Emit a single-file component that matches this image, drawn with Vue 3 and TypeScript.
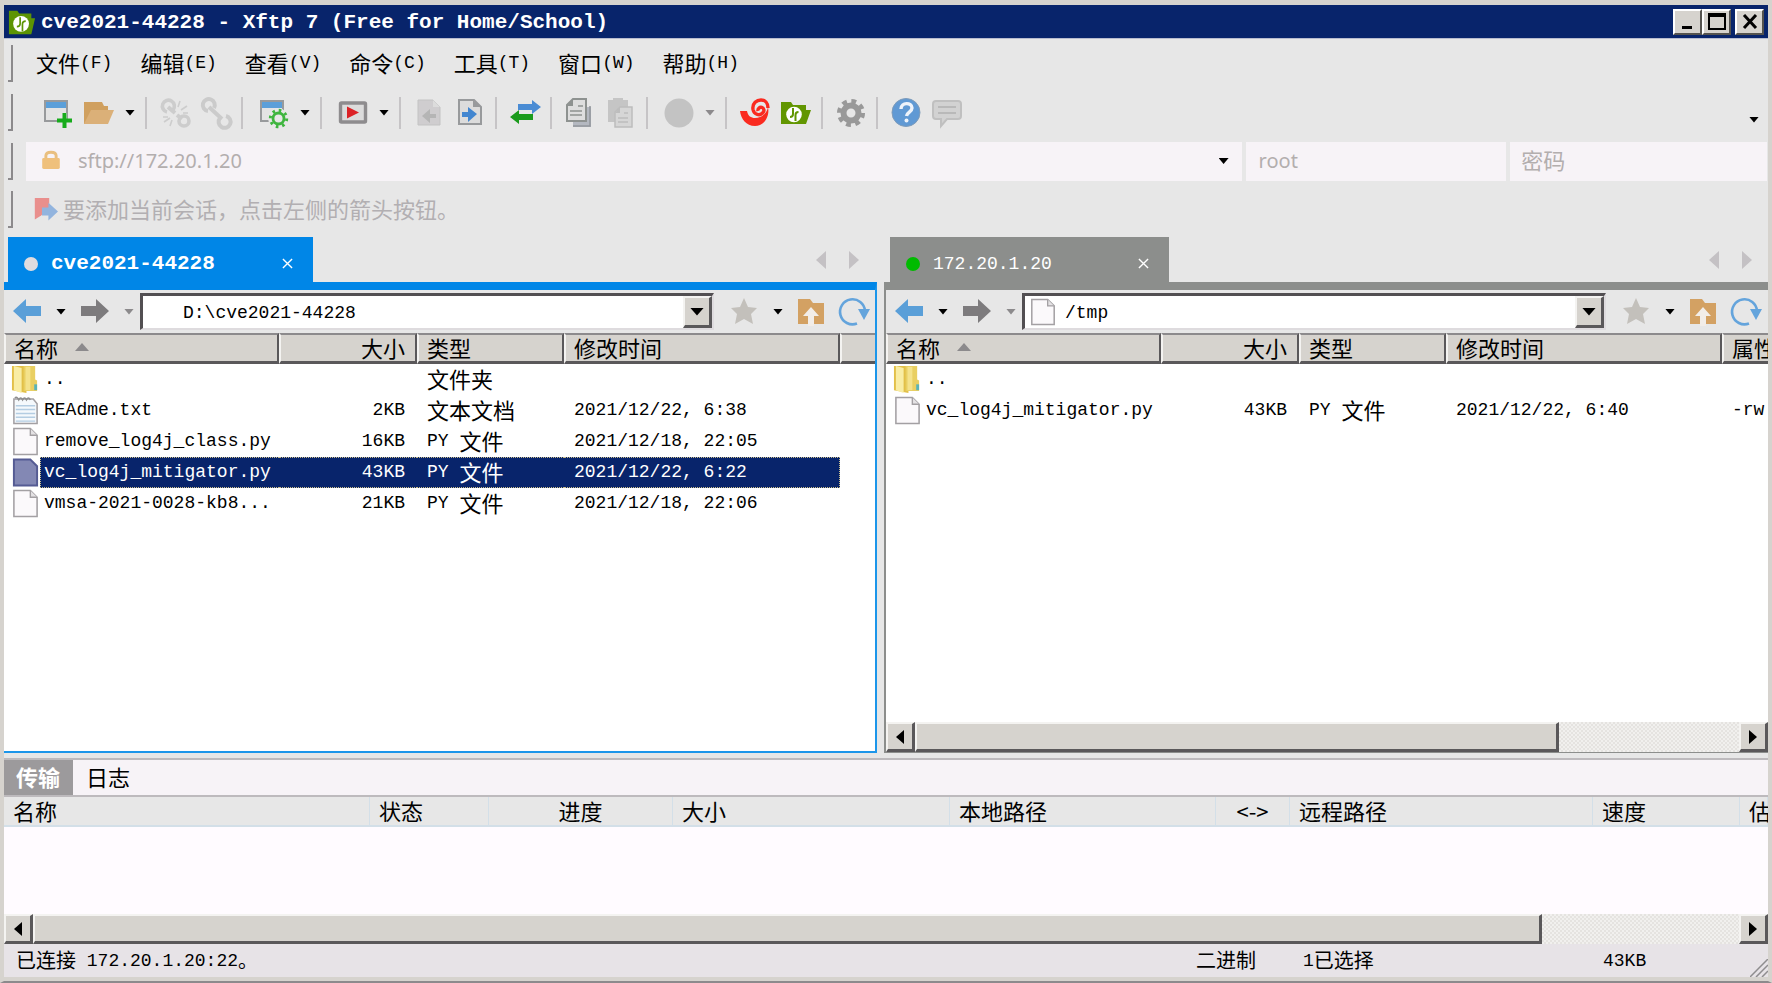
<script setup lang="ts">
import { h, ref } from 'vue'

interface FileRow {
  icon: string
  name: string
  size: string
  type: string
  modified: string
  attrs?: string
}

interface Pane {
  id: string
  title: string
  path: string
  pathIcon?: string
  rows: FileRow[]
  scroll: boolean
  hasAttrs: boolean
}

interface Tool {
  kind: 'icon' | 'drop' | 'sep' | 'wide'
  icon?: string
  label?: string
  off?: boolean
}

const pageShape =
  '<path d="M3 1.5h17l7 7v20H3z" fill="#fbf9fb" stroke="#a3a0a3" stroke-width="1.6"/><path d="M20 1.5v7h7" fill="#e4e2e4" stroke="#a3a0a3" stroke-width="1.4"/>'

const icons: Record<string, string> = {
  app: '<path d="M1 3h9l2 3h13v5h4l-4 17H1z" fill="#5d9404"/><circle cx="14" cy="17" r="8.500" fill="#fff"/><path d="M13 10v7q0 3-3.500 3M15.500 25v-8q0-3 3.500-3" fill="none" stroke="#5d9404" stroke-width="1.800"/>',
  newWindow:
    '<rect x="2" y="3" width="22" height="20" fill="#e3e3e3" stroke="#989a9c" stroke-width="2"/><path d="M3 4h20v6H3z" fill="#5b9fd9"/><path d="M15 15h9v9h-9z" fill="#e7e7e7"/><path d="M21.500 15v15M14 22.500h15" stroke="#17ab1c" stroke-width="4"/>',
  folder:
    '<path d="M0 4h18l2 4h4v18H0z" fill="#d0a05f"/><path d="M7 12h23l-6 14H0z" fill="#dbb078"/>',
  unlink:
    '<g fill="none" stroke="#cdcdcd" stroke-width="3.600"><path d="M13 12a6 6 0 1 0-6 2"/><circle cx="24" cy="23" r="5"/><path d="M8 9l7 6M17 17l5 4" stroke-width="4"/></g><path d="M18 9l2-6M21 12l6-4M23 15h5M4 24l6-4M10 28l2-6M3 19h5" stroke="#cdcdcd" stroke-width="1.600"/>',
  link: '<g fill="none" stroke="#cbcbcb" stroke-width="4"><path d="M13 10a6 6 0 1 0-6 3"/><path d="M8 9l13 12"/><path d="M19 20a6 6 0 1 0 6-2"/></g>',
  windowGear:
    '<rect x="2" y="3" width="22" height="20" fill="#e3e3e3" stroke="#989a9c" stroke-width="2"/><path d="M3 4h20v6H3z" fill="#5b9fd9"/><circle cx="19" cy="20" r="10" fill="#e7e7e7"/><circle cx="19.500" cy="20.500" r="5.500" fill="none" stroke="#3fb53f" stroke-width="2.800"/><circle cx="19.500" cy="20.500" r="8.200" fill="none" stroke="#3fb53f" stroke-width="3" stroke-dasharray="2.600 3.840"/>',
  play: '<rect x="2.500" y="5" width="25" height="19" rx="1" fill="#dcdcdc" stroke="#8e8c8e" stroke-width="3.400"/><path d="M9 8.500v12l12-6z" fill="#dc2226"/>',
  pageLeft:
    '<path d="M4 2h15l7 7v18H4z" fill="#cfcdcf" stroke="#c3c3c3"/><path d="M19 2v7h7" fill="#dcdcdc"/><path d="M22 16h-6v-5l-8 7 8 7v-5h6z" fill="#b5b5b5"/>',
  pageRight:
    '<path d="M4 2h15l7 7v17H4z" fill="#dcdcdc" stroke="#989a9c" stroke-width="2"/><path d="M18 2v7h8" fill="#989a9c"/><path d="M7 14h6V9l9 7-9 8v-5H7z" fill="#4286d0"/>',
  sync: '<path d="M8 6h14V2l9 7-9 7v-4H8z" fill="#4a8cd4"/><path d="M23 16v6H9v4l-9-7 9-7v4z" fill="#1b9b1c"/>',
  copy: '<path d="M8 9h18v20H8z" fill="#b4b8c0"/><path d="M25 8v20H8" fill="none" stroke="#92969c" stroke-width="1.500"/><path d="M8 1h13v22H2V7z" fill="#dedede" stroke="#8e9290" stroke-width="2"/><path d="M8 1v7H2" fill="#8e9290"/><path d="M13 8h5M5 13h12M5 17h12" stroke="#8e9290" stroke-width="1.600"/>',
  paste:
    '<path d="M2 2h5V0h10v2h5v22H2z" fill="#c5c5c5"/><path d="M14 9h12v20H9V14z" fill="#d6d6d6" stroke="#bdbdbd" stroke-width="1.500"/><path d="M14 9v6H9" fill="#bdbdbd"/><path d="M18 15h4M12 20h10M12 24h10" stroke="#bdbdbd" stroke-width="1.500"/>',
  disc: '<circle cx="15" cy="15" r="14.500" fill="#c3c3c3"/>',
  shell:
    '<path d="M0 13h7c1 5 4 7 8 7 7 0 12-5 13-11 2 10-4 19-13 19S1 21 0 13z" fill="#fa2b20"/><path d="M18 13a3 3 0 1 1 5 1.500c-3 4-9 2-10-3C12 5 17 2 21 2c4 0 7 3 7 8" fill="none" stroke="#fa2b20" stroke-width="3.400"/>',
  ftpFolder:
    '<path d="M0 4h10l2 3h13v5h5l-5 14H0z" fill="#629601"/><circle cx="13" cy="16.500" r="7.800" fill="#fff"/><path d="M12 10v6q0 3-3 3M14.500 23v-6q0-3 3-3" fill="none" stroke="#629601" stroke-width="2"/>',
  gear: '<circle cx="15" cy="15" r="7.500" fill="none" stroke="#999" stroke-width="6"/><circle cx="15" cy="15" r="11.800" fill="none" stroke="#999" stroke-width="4.500" stroke-dasharray="4.800 4.467"/>',
  help: '<circle cx="15" cy="14.500" r="14" fill="#6099d4" stroke="#7f9cba" stroke-width="1"/><path d="M10 11c0-7 11-7 11-1 0 4-5 4-5.500 8" fill="none" stroke="#eef3fa" stroke-width="3.400"/><circle cx="15.500" cy="22.500" r="2" fill="#eef3fa"/>',
  chat: '<path d="M4 3h22q3 0 3 3v12q0 3-3 3H15l-6 7v-7H4q-3 0-3-3V6q0-3 3-3z" fill="#d2d2d2" stroke="#c0c0c0" stroke-width="2"/><path d="M6 9h18M6 15h18" stroke="#b9b9b9" stroke-width="2"/>',
  lock: '<path d="M8 14V8q0-5 7-5t7 5v6" fill="none" stroke="#e9bf7f" stroke-width="4"/><rect x="3" y="11" width="24" height="15" rx="2" fill="#efc07c"/>',
  bookmark:
    '<path d="M1 0h18v12L9 22l-8 5z" fill="#e98f8d"/><path d="M10 12h8V6l12 11-12 11v-6h-8z" fill="#92b4de"/>',
  back: '<path d="M1 14 14 2v7h15v10H14v7z" fill="#5a9fd8"/>',
  forward: '<path d="M29 14 16 2v7H1v10h15v7z" fill="#7d7b7d"/>',
  star: '<path d="M15 1l4 9 9 1-6 6 2 10-9-5-9 5 2-10-6-6 9-1z" fill="#c3c0bb"/>',
  upFolder:
    '<path d="M1 2h12l3 4h11v21H1z" fill="#d3a163"/><path d="M14 10l8 9h-5v10h-6V19H6z" fill="#f2ede8"/>',
  refresh:
    '<path d="M18 26.500A12.500 12.500 0 1 1 26 14" fill="none" stroke="#64a4dc" stroke-width="2.600"/><path d="M19 12h12l-6 11z" fill="#64a4dc"/>',
  file: pageShape,
  text:
    '<path d="M3 3h20l4 5v20.500H3z" fill="#f5f9fc" stroke="#a3a0a3" stroke-width="1.600"/><path d="M4 2q2-2 4 2 2-4 4 0 2-4 4 0 2-4 4 0" fill="none" stroke="#8e8e8e" stroke-width="1.500"/><path d="M5 10h20M5 14h20M5 18h20M5 22h20M5 26h20" stroke="#b4cde2" stroke-width="1.500"/>',
  selected: '<path d="M3 1.500h17l7 7v20H3z" fill="#8388b4" stroke="#555b93" stroke-width="2"/>',
  dir: '<path d="M1 1h15v28L1 26z" fill="#e2c048"/><path d="M3 1l8 2v26l-8-3z" fill="#f9eda4"/><path d="M13 1h12v14l2 1v11H13z" fill="#e9cf62"/><path d="M15 2h5v24h-5z" fill="#f4e28b"/><path d="M24 20h3v6h-3z" fill="#59b3b8"/>',
}

const Icon = (props: { name: string }) =>
  h('svg', { viewBox: '0 0 30 30', 'aria-hidden': 'true', innerHTML: icons[props.name] })
Icon.props = ['name']

/* Han runs are set larger than the fixed-pitch Latin runs beside them. */
const Words = (props: { text: string }) =>
  h(
    'span',
    { class: 'words' },
    props.text
      .split(/([\u3000-\u9fff\uff00-\uffef]+)/)
      .filter(Boolean)
      .map((run) => h('span', { class: /[\u3000-\u9fff\uff00-\uffef]/.test(run) ? 'han' : 'latin' }, run)),
  )
Words.props = ['text']

const menus = ['文件(F)', '编辑(E)', '查看(V)', '命令(C)', '工具(T)', '窗口(W)', '帮助(H)']

const tools: Tool[] = [
  { kind: 'icon', icon: 'newWindow', label: '新建' },
  { kind: 'icon', icon: 'folder', label: '打开' },
  { kind: 'drop', label: '打开选项' },
  { kind: 'sep' },
  { kind: 'icon', icon: 'unlink', label: '断开' },
  { kind: 'icon', icon: 'link', label: '重新连接' },
  { kind: 'sep' },
  { kind: 'wide' },
  { kind: 'icon', icon: 'windowGear', label: '属性' },
  { kind: 'drop', label: '属性选项' },
  { kind: 'sep' },
  { kind: 'wide' },
  { kind: 'icon', icon: 'play', label: '运行' },
  { kind: 'drop', label: '运行选项' },
  { kind: 'sep' },
  { kind: 'icon', icon: 'pageLeft', label: '向左传输' },
  { kind: 'icon', icon: 'pageRight', label: '向右传输' },
  { kind: 'sep' },
  { kind: 'icon', icon: 'sync', label: '同步' },
  { kind: 'sep' },
  { kind: 'icon', icon: 'copy', label: '复制' },
  { kind: 'icon', icon: 'paste', label: '粘贴' },
  { kind: 'sep' },
  { kind: 'wide' },
  { kind: 'icon', icon: 'disc', label: '编码' },
  { kind: 'drop', label: '编码选项', off: true },
  { kind: 'sep' },
  { kind: 'icon', icon: 'shell', label: 'Xshell' },
  { kind: 'icon', icon: 'ftpFolder', label: 'Xftp' },
  { kind: 'sep' },
  { kind: 'icon', icon: 'gear', label: '选项' },
  { kind: 'sep' },
  { kind: 'icon', icon: 'help', label: '帮助' },
  { kind: 'icon', icon: 'chat', label: '反馈' },
]

const panes: Pane[] = [
  {
    id: 'local',
    title: 'cve2021-44228',
    path: 'D:\\cve2021-44228',
    scroll: false,
    hasAttrs: false,
    rows: [
      { icon: 'dir', name: '..', size: '', type: '文件夹', modified: '' },
      { icon: 'text', name: 'REAdme.txt', size: '2KB', type: '文本文档', modified: '2021/12/22, 6:38' },
      { icon: 'file', name: 'remove_log4j_class.py', size: '16KB', type: 'PY 文件', modified: '2021/12/18, 22:05' },
      { icon: 'file', name: 'vc_log4j_mitigator.py', size: '43KB', type: 'PY 文件', modified: '2021/12/22, 6:22' },
      { icon: 'file', name: 'vmsa-2021-0028-kb8...', size: '21KB', type: 'PY 文件', modified: '2021/12/18, 22:06' },
    ],
  },
  {
    id: 'remote',
    title: '172.20.1.20',
    path: '/tmp',
    pathIcon: 'file',
    scroll: true,
    hasAttrs: true,
    rows: [
      { icon: 'dir', name: '..', size: '', type: '', modified: '' },
      { icon: 'file', name: 'vc_log4j_mitigator.py', size: '43KB', type: 'PY 文件', modified: '2021/12/22, 6:40', attrs: '-rw' },
    ],
  },
]

const selected = ref('local:3')
const transferHeads = ['名称', '状态', '进度', '大小', '本地路径', '<->', '远程路径', '速度', '估']
</script>

<template>
  <div class="window">
    <header class="titlebar">
      <Icon name="app" class="app-icon" />
      <h1>cve2021-44228 - Xftp 7 (Free for Home/School)</h1>
      <div class="win-buttons">
        <button type="button" aria-label="最小化"><svg viewBox="0 0 20 18"><path d="M4 13h10v3H4z" /></svg></button>
        <button type="button" aria-label="最大化"><svg viewBox="0 0 20 18"><path d="M1 0h18v17H1zM3 4v11h14V4z" fill-rule="evenodd" /></svg></button>
        <button type="button" class="close" aria-label="关闭"><svg viewBox="0 0 20 18"><path d="M4 2l12 13M16 2L4 15" stroke="#000" stroke-width="3" /></svg></button>
      </div>
    </header>

    <nav class="bar menu">
      <i class="grip"></i>
      <button v-for="m in menus" :key="m" type="button"><Words :text="m" /></button>
    </nav>

    <div class="bar tools">
      <i class="grip"></i>
      <template v-for="(t, i) in tools" :key="i">
        <button v-if="t.kind === 'icon'" type="button" class="tool" :aria-label="t.label"><Icon :name="t.icon!" /></button>
        <button v-else-if="t.kind === 'drop'" type="button" class="drop" :class="{ off: t.off }" :aria-label="t.label"></button>
        <i v-else-if="t.kind === 'sep'" class="sep"></i>
        <i v-else class="space"></i>
      </template>
      <button type="button" class="drop more" aria-label="更多"></button>
    </div>

    <form class="bar address" @submit.prevent>
      <i class="grip"></i>
      <div class="field host">
        <Icon name="lock" />
        <input aria-label="地址" value="sftp://172.20.1.20" />
        <button type="button" class="drop" aria-label="历史"></button>
      </div>
      <div class="field user"><input aria-label="用户名" value="root" /></div>
      <div class="field pass"><input type="password" aria-label="密码" placeholder="密码" /></div>
    </form>

    <div class="bar hint">
      <i class="grip"></i>
      <Icon name="bookmark" />
      <span>要添加当前会话，点击左侧的箭头按钮。</span>
    </div>

    <main class="panes">
      <section v-for="p in panes" :key="p.id" class="pane" :class="p.id">
        <div class="tabs">
          <div class="tab">
            <i class="dot"></i>
            <span>{{ p.title }}</span>
            <button type="button" aria-label="关闭标签"><svg viewBox="0 0 12 12"><path d="M1 1l10 10M11 1L1 11" /></svg></button>
          </div>
          <div class="tab-scroll">
            <button type="button" aria-label="上一个"><svg viewBox="0 0 10 18"><path d="M10 0v18L0 9z" /></svg></button>
            <button type="button" aria-label="下一个"><svg viewBox="0 0 10 18"><path d="M0 0v18l10-9z" /></svg></button>
          </div>
        </div>
        <div class="frame">
          <div class="nav">
            <div class="group">
              <button type="button" class="tool" aria-label="后退"><Icon name="back" /></button>
              <button type="button" class="drop pad" aria-label="后退历史"></button>
              <button type="button" class="tool" aria-label="前进"><Icon name="forward" /></button>
              <button type="button" class="drop pad off" aria-label="前进历史"></button>
            </div>
            <div class="combo">
              <Icon v-if="p.pathIcon" :name="p.pathIcon" />
              <input aria-label="路径" :value="p.path" />
              <button type="button" class="raised" aria-label="路径列表"><i class="drop big"></i></button>
            </div>
            <div class="group">
              <button type="button" class="tool" aria-label="收藏"><Icon name="star" /></button>
              <button type="button" class="drop pad" aria-label="收藏列表"></button>
              <button type="button" class="tool" aria-label="上级目录"><Icon name="upFolder" /></button>
              <button type="button" class="tool" aria-label="刷新"><Icon name="refresh" /></button>
            </div>
          </div>
          <div class="list">
            <table class="files">
              <colgroup>
                <col class="c-name" /><col class="c-size" /><col class="c-type" /><col class="c-date" /><col />
              </colgroup>
              <thead>
                <tr>
                  <th>名称<i class="sort"></i></th>
                  <th class="num">大小</th>
                  <th>类型</th>
                  <th>修改时间</th>
                  <th>{{ p.hasAttrs ? '属性' : '' }}</th>
                </tr>
              </thead>
              <tbody>
                <tr
                  v-for="(r, i) in p.rows"
                  :key="r.name"
                  :class="{ picked: selected === p.id + ':' + i }"
                  @click="selected = p.id + ':' + i"
                >
                  <td class="name">
                    <div>
                      <Icon :name="selected === p.id + ':' + i ? 'selected' : r.icon" />
                      <span>{{ r.name }}</span>
                    </div>
                  </td>
                  <td class="num">{{ r.size }}</td>
                  <td><Words :text="r.type" /></td>
                  <td>{{ r.modified }}</td>
                  <td>{{ r.attrs }}</td>
                </tr>
              </tbody>
            </table>
          </div>
          <div v-if="p.scroll" class="scrollbar">
            <button type="button" class="raised" aria-label="向左滚动"><svg viewBox="0 0 8 14"><path d="M8 0v14L0 7z" /></svg></button>
            <i class="thumb raised"></i><i class="track"></i>
            <button type="button" class="raised" aria-label="向右滚动"><svg viewBox="0 0 8 14"><path d="M0 0v14l8-7z" /></svg></button>
          </div>
        </div>
      </section>
    </main>

    <section class="transfers">
      <div class="log-tabs">
        <button type="button" class="on">传输</button>
        <button type="button">日志</button>
      </div>
      <div class="queue">
        <table>
          <colgroup><col v-for="(t, i) in transferHeads" :key="t" :class="'q' + i" /></colgroup>
          <thead>
            <tr><th v-for="t in transferHeads" :key="t">{{ t }}</th></tr>
          </thead>
        </table>
      </div>
      <div class="scrollbar long">
        <button type="button" class="raised" aria-label="向左滚动"><svg viewBox="0 0 8 14"><path d="M8 0v14L0 7z" /></svg></button>
        <i class="thumb raised"></i><i class="track"></i>
        <button type="button" class="raised" aria-label="向右滚动"><svg viewBox="0 0 8 14"><path d="M0 0v14l8-7z" /></svg></button>
      </div>
    </section>

    <footer class="status">
      <span class="msg"><Words text="已连接 172.20.1.20:22。" /></span>
      <span class="mode"><Words text="二进制" /></span>
      <span class="count"><Words text="1已选择" /></span>
      <span class="bytes"><Words text="43KB" /></span>
      <svg class="resize" viewBox="0 0 18 18"><path d="M0 18L18 0M6 18L18 6M12 18l6-6" stroke="#8f8d8f" stroke-width="1.500" /></svg>
    </footer>
  </div>
</template>

<style>
body {
  margin: 0;
}
.words {
  display: inline-flex;
  align-items: center;
  height: 29px;
  vertical-align: top;
  white-space: pre;
}
.words .han {
  font-family: 'Noto Sans CJK SC', sans-serif;
  font-size: 22px;
  line-height: 26px;
  padding-bottom: 3px;
}
.status .words .han {
  font-size: 20px;
}
</style>

<style scoped>
* {
  box-sizing: border-box;
}
.window {
  display: flex;
  flex-direction: column;
  height: 100vh;
  border: solid #d6d3ce;
  border-width: 5px 4px 2px;
  border-bottom-color: #8c8a8c;
  background: #e7e7e7;
  color: #000;
  font: 18px/30px 'Liberation Mono', 'Noto Sans CJK SC', monospace;
  overflow: hidden;
}
button {
  padding: 0;
  border: 0;
  background: none;
  color: inherit;
  font: inherit;
}
input {
  min-width: 0;
  padding: 0;
  border: 0;
  outline: 0;
  background: none;
  font: inherit;
}
svg {
  display: block;
}

.titlebar {
  flex: none;
  display: flex;
  align-items: center;
  height: 34px;
  padding: 0 4px;
  background: #08246b;
  border-bottom: 1px solid #b8bccf;
  color: #fff;
}
.app-icon {
  width: 28px;
  height: 28px;
}
h1 {
  flex: 1;
  margin: 0 0 0 5px;
  padding-top: 3px;
  font-size: 21px;
  line-height: 30px;
  font-weight: bold;
  white-space: nowrap;
}
.win-buttons {
  display: flex;
}
.win-buttons button {
  display: flex;
  align-items: center;
  justify-content: center;
  width: 29px;
  height: 26px;
  background: #d6d3ce;
  border: 2px solid;
  border-color: #fff #55534f #55534f #fff;
}
.win-buttons svg {
  width: 20px;
  height: 18px;
}
.win-buttons .close {
  margin-left: 4px;
}

.bar {
  flex: none;
  display: flex;
  align-items: center;
  height: 49px;
}
.grip {
  flex: none;
  width: 5px;
  height: 37px;
  margin-left: 4px;
  border: solid #8c8a8c;
  border-width: 0 2px 2px 0;
}
.menu button {
  margin-left: 28px;
}
.menu .grip + button {
  margin-left: 23px;
}

.tools {
  gap: 11px;
}
.tools .grip {
  margin-right: 19px;
}
.tool {
  flex: none;
  width: 30px;
  height: 30px;
}
.tool svg {
  width: 30px;
  height: 30px;
  overflow: visible;
}
.drop {
  flex: none;
  display: block;
  width: 10px;
  height: 6px;
  background: #000;
  clip-path: polygon(0 0, 100% 0, 50% 100%);
}
.drop.off {
  background: #8c8a8c;
}
.drop.pad {
  margin: 0 2px;
}
.drop.big {
  width: 14px;
  height: 8px;
}
.drop.more {
  margin: 14px 9px 0 auto;
}
.sep {
  flex: none;
  width: 2px;
  height: 32px;
  margin: 0 2px 0 -1px;
  background: #c6c4c6;
}
.space {
  flex: none;
  width: 3px;
  margin-left: -11px;
}

.address {
  height: 48px;
  padding-right: 1px;
  gap: 4px;
}
.address .grip {
  margin-right: 9px;
}
.field {
  flex: 248 1 0;
  display: flex;
  align-items: center;
  min-width: 0;
  height: 39px;
  padding-left: 13px;
  background: #f7f3f7;
  font: 20px/30px 'Noto Sans', 'Noto Sans CJK SC', sans-serif;
}
.field.host {
  flex-grow: 1190;
  padding: 0 13px 0 14px;
}
.field.pass {
  flex-grow: 246;
  padding: 0 0 3px 11px;
}
.field svg {
  width: 22px;
  height: 22px;
  margin-right: 16px;
}
.field input {
  flex: 1;
  color: #b3aeae;
}
.field.pass input {
  font-size: 22px;
}
.field input::placeholder {
  color: #b3aeae;
  opacity: 1;
}
.hint svg {
  width: 24px;
  height: 24px;
  margin: 0 5px 0 21px;
}
.hint span {
  padding-bottom: 4px;
  color: #b2afb2;
  font: 22px/30px 'Noto Sans CJK SC', sans-serif;
}

.panes {
  flex: 1;
  display: flex;
  gap: 7px;
  min-height: 0;
}
.pane {
  display: flex;
  flex-direction: column;
  flex: 873 1 0;
  min-width: 0;
}
.pane.remote {
  flex-grow: 884;
}
.tabs {
  flex: none;
  display: flex;
  align-items: flex-end;
  height: 48px;
  padding-left: 4px;
}
.remote .tabs {
  padding-left: 6px;
}
.tab {
  display: flex;
  align-items: center;
  width: 305px;
  height: 45px;
  padding: 8px 20px 0 16px;
  background: #0086e7;
  color: #fff;
  font-size: 21px;
  font-weight: bold;
}
.remote .tab {
  width: 279px;
  background: #8c8e8c;
  font-size: 18px;
  font-weight: normal;
}
.dot {
  width: 14px;
  height: 14px;
  margin-right: 13px;
  border-radius: 50%;
  background: #e0dcdf;
}
.remote .dot {
  background: #0b0;
}
.tab span {
  flex: 1;
}
.tab svg {
  width: 11px;
  height: 11px;
  stroke: #fff;
  stroke-width: 1.5;
}
.tab-scroll {
  display: flex;
  gap: 23px;
  margin: 0 18px 13px auto;
}
.remote .tab-scroll {
  margin-right: 16px;
}
.tab-scroll svg {
  width: 10px;
  height: 18px;
  fill: #c4c1c4;
}
.frame {
  flex: 1;
  display: flex;
  flex-direction: column;
  min-height: 0;
  border: solid #1c96ea;
  border-width: 8px 2px 2px 0;
  border-top-color: #0086e7;
}
.remote .frame {
  border-color: #8c8e8c;
  border-width: 8px 0 1px 2px;
}
.nav {
  flex: none;
  display: flex;
  align-items: center;
  height: 43px;
  padding: 0 6px 0 8px;
}
.remote .nav {
  padding-right: 7px;
}
.group {
  flex: none;
  display: flex;
  align-items: center;
  gap: 12px;
}
.combo {
  flex: 1;
  display: flex;
  align-items: center;
  min-width: 0;
  height: 37px;
  margin: 0 15px 0 4px;
  padding-left: 40px;
  background: #fff;
  border: solid;
  border-width: 3px 2px 2px 3px;
  border-color: #524f52 #dedbde #dedbde #524f52;
}
.remote .combo {
  padding-left: 4px;
}
.combo svg {
  width: 28px;
  height: 28px;
  margin-right: 8px;
}
.combo input {
  flex: 1;
  padding-top: 2px;
}
.raised {
  display: flex;
  align-items: center;
  justify-content: center;
  background: #d6d3ce;
  border: solid;
  border-width: 2px 3px 3px 2px;
  border-color: #f4f3f1 #5a585a #5a585a #f4f3f1;
}
.combo .raised {
  width: 29px;
  height: 32px;
}

.list {
  flex: 1;
  min-height: 0;
  overflow: hidden;
  background: #fff;
}
table {
  width: 100%;
  table-layout: fixed;
  border-collapse: separate;
  border-spacing: 0;
}
.c-name {
  width: 275px;
}
.c-size {
  width: 138px;
}
.c-type {
  width: 147px;
}
.c-date {
  width: 276px;
}
th,
td {
  padding: 0 0 0 10px;
  white-space: nowrap;
  text-align: left;
  font-weight: normal;
}
th {
  font: 22px/24px 'Noto Sans CJK SC', sans-serif;
}
.files th {
  height: 31px;
  background: #d6d3ce;
  border: solid;
  border-width: 2px 2px 3px 2px;
  border-color: #8c8a8c #5a585a #5a585a #f4f3f1;
  padding: 0 0 2px 8px;
}
.files th:last-child {
  border-right: 0;
}
.files th.num {
  padding-right: 10px;
}
.num {
  padding-right: 12px;
  text-align: right;
}
.sort {
  display: inline-block;
  width: 14px;
  height: 8px;
  margin: 0 0 6px 17px;
  background: #8c8a8c;
  clip-path: polygon(50% 0, 100% 100%, 0 100%);
}
td {
  height: 31px;
  line-height: 29px;
}
td.name {
  padding-left: 7px;
}
.name div {
  display: flex;
  align-items: center;
  height: 31px;
}
.name svg {
  flex: none;
  width: 29px;
  height: 29px;
}
.name span {
  flex: 1;
  height: 31px;
  padding-left: 3px;
  border: 1px solid transparent;
  border-right: 0;
}
.picked td:not(.name):not(:last-child),
.picked .name span {
  background: #08246b;
  color: #fff;
  border: 0 dotted #c9bd8a;
  border-width: 1px 0;
}
.picked .name span {
  border-left-width: 1px;
}
.picked td:nth-child(4) {
  border-right-width: 1px !important;
}

.scrollbar {
  flex: none;
  display: flex;
  height: 30px;
  background: #ebe9e7;
}
.scrollbar button {
  flex: none;
  width: 29px;
}
.scrollbar svg {
  width: 8px;
  height: 14px;
}
.thumb {
  flex: 643 1 0;
}
.track {
  flex: 181 1 0;
  background: repeating-conic-gradient(#e5e3e0 0 25%, #f1f0ee 0 50%) 0 0 / 4px 4px;
}
.long .thumb {
  flex-grow: 1508;
}
.long .track {
  flex-grow: 198;
}

.transfers {
  flex: none;
  display: flex;
  flex-direction: column;
  margin-top: 5px;
  border-top: 2px solid #bdbabd;
}
.log-tabs {
  display: flex;
  height: 37px;
  background: #f7f3f7;
  border-bottom: 2px solid #bdbabd;
  font: 22px/30px 'Noto Sans CJK SC', sans-serif;
}
.log-tabs button {
  padding: 0 13px 4px;
}
.log-tabs .on {
  padding-left: 12px;
  background: #9c9a9c;
  color: #fff;
  font-weight: bold;
}
.queue {
  height: 117px;
  background: #fffbff;
  overflow: hidden;
}
.queue th {
  height: 30px;
  padding: 0 0 2px 9px;
  background: #e7e7e7;
  border: solid #d3dfe8;
  border-width: 0 1px 2px 0;
}
.queue th:nth-child(3),
.queue th:nth-child(6) {
  padding-left: 0;
  text-align: center;
}
.q0 {
  width: 366px;
}
.q1 {
  width: 119px;
}
.q2 {
  width: 184px;
}
.q3 {
  width: 277px;
}
.q4 {
  width: 266px;
}
.q5 {
  width: 74px;
}
.q6 {
  width: 303px;
}
.q7 {
  width: 147px;
}

.status {
  flex: none;
  display: flex;
  align-items: center;
  height: 37px;
  padding: 2px 0 0 12px;
  background: #e7e3e7;
  border-bottom: 4px solid #d6d3ce;
}
.msg {
  flex: 1180 1 0;
}
.mode {
  flex: 107 1 0;
}
.count {
  flex: 300 1 0;
}
.bytes {
  flex: 147 1 0;
}
.resize {
  align-self: flex-end;
  width: 18px;
  height: 18px;
}
</style>
